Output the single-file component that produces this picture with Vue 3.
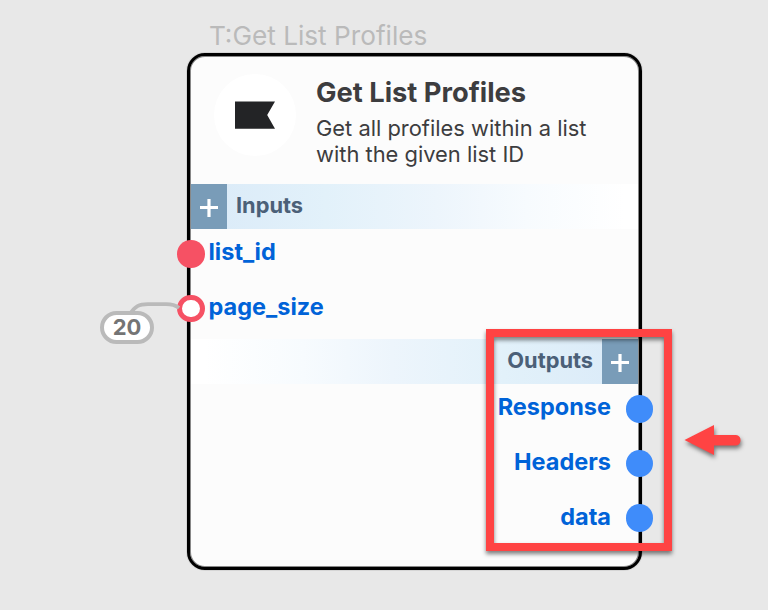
<script setup>
const inputs = [
  { name: 'list_id', filled: true },
  { name: 'page_size', filled: false, value: '20' },
]
const outputs = ['Response', 'Headers', 'data']
</script>

<template>
  <main class="canvas">
    <div class="caption">T:Get List Profiles</div>
    <section class="node">
      <header class="head">
        <div class="logo">
          <svg width="40" height="28" viewBox="0 0 40 28"><path d="M0 .5H40L32.2 14L40 27.7H0Z" fill="#232426" /></svg>
        </div>
        <div class="intro">
          <h1>Get List Profiles</h1>
          <p>Get all profiles within a list<br />with the given list ID</p>
        </div>
      </header>

      <div class="band">
        <button class="add" aria-label="Add input">
          <svg width="18" height="18" viewBox="0 0 18 18"><path d="M0 8.500H18M9 0V18" stroke="#fff" stroke-width="3.2" /></svg>
        </button>
        <span class="band-label">Inputs</span>
      </div>
      <ul class="ports inputs">
        <li v-for="port in inputs" :key="port.name">
          <i class="dot" :class="{ hollow: !port.filled }"></i>
          <span class="name">{{ port.name }}</span>
        </li>
      </ul>

      <div class="band reverse">
        <button class="add" aria-label="Add output">
          <svg width="18" height="18" viewBox="0 0 18 18"><path d="M0 8.500H18M9 0V18" stroke="#fff" stroke-width="3.2" /></svg>
        </button>
        <span class="band-label">Outputs</span>
      </div>
      <ul class="ports outputs">
        <li v-for="name in outputs" :key="name">
          <span class="name">{{ name }}</span>
          <i class="dot"></i>
        </li>
      </ul>
    </section>

    <svg class="wire" width="60" height="24" viewBox="0 0 60 24"><path d="M8 18C13 10 17 8.200 26 8.200H44C50 8.200 53 8.800 57 12" fill="none" stroke="#bababa" stroke-width="3.8" /></svg>
    <div class="value">{{ inputs[1].value }}</div>

    <div class="highlight"></div>
    <svg class="arrow" width="80" height="50" viewBox="0 0 80 50"><path d="M4.500 20L34 5V15H56A5.300 5.300 0 0 1 56 25.500H34V35Z" fill="#ff4343" /></svg>
  </main>
</template>

<style>
body { margin: 0; background: #e8e8e8; }
</style>

<style scoped>
.canvas {
  position: relative;
  box-sizing: border-box;
  width: 768px;
  height: 610px;
  padding: 20px 0 0 187px;
  overflow: hidden;
  background: #e8e8e8;
  font-family: Inter, "Liberation Sans", sans-serif;
}
.caption {
  height: 33px;
  padding-left: 22px;
  color: #bababa;
  font-size: 26.2px;
  line-height: 32px;
  white-space: nowrap;
}
.node {
  box-sizing: border-box;
  width: 455px;
  height: 517px;
  padding: 1px;
  border: 3px solid #000;
  border-radius: 18px;
  background: #fcfcfc;
  box-shadow: inset 0 0 0 1px #888, 0 0 0 1px rgba(0, 0, 0, .08);
}
.head {
  display: flex;
  box-sizing: border-box;
  height: 127px;
  padding: 17px 0 0 23px;
}
.logo {
  display: flex;
  align-items: center;
  justify-content: center;
  width: 82px;
  height: 82px;
  border-radius: 50%;
  background: #fff;
}
.intro { padding-left: 20px; color: #3d3d3f; white-space: nowrap; }
h1 { margin: 1px 0 4px; font-size: 27.3px; line-height: 36px; font-weight: 700; }
p { margin: 0; font-size: 21.9px; line-height: 26px; }
.band {
  display: flex;
  height: 45px;
  background: linear-gradient(90deg, #daeaf8, #e2f1fa 30%, #edf5fc 55%, #f7fbfe 75%, #fff 97%);
}
.band.reverse {
  flex-direction: row-reverse;
  background: linear-gradient(270deg, #daeaf8, #e2f1fa 30%, #edf5fc 55%, #f7fbfe 75%, #fff 97%);
}
.add {
  display: flex;
  align-items: center;
  justify-content: center;
  width: 36px;
  height: 45px;
  padding: 3px 0 0;
  border: 0;
  background: #799cb8;
}
.band-label {
  padding: 0 9px;
  color: #4b6078;
  font-size: 21.8px;
  line-height: 43px;
  font-weight: 700;
}
.ports { margin: 0; padding: 0; list-style: none; }
.ports li { display: flex; align-items: center; height: 54.7px; }
.inputs { height: 110px; margin-left: -14px; }
.inputs li { position: relative; top: -2.5px; }
.outputs { margin-right: -15px; }
.outputs li { justify-content: flex-end; position: relative; top: -2.5px; }
.name {
  margin: 0 4px;
  padding-bottom: 3px;
  color: #0063d8;
  font-size: 23.5px;
  line-height: 30px;
  font-weight: 700;
}
.outputs .name { margin-right: 14.5px; }
.dot { box-sizing: border-box; width: 27.5px; height: 27.5px; border-radius: 50%; background: #3f8cfa; }
.inputs .dot { background: #f65164; }
.inputs .dot.hollow { border: 5px solid #f65164; background: #fff; }
.wire { position: absolute; left: 122px; top: 296px; }
.value {
  position: absolute;
  left: 100px;
  top: 311px;
  box-sizing: border-box;
  width: 54px;
  height: 33px;
  border: 4px solid #bababa;
  border-radius: 17px;
  background: #fff;
  color: #747474;
  font-size: 22px;
  line-height: 25px;
  font-weight: 700;
  text-align: center;
}
.highlight {
  position: absolute;
  left: 486px;
  top: 329px;
  box-sizing: border-box;
  width: 186px;
  height: 222px;
  border: 8px solid #ff4343;
  filter: drop-shadow(0 3px 2px rgba(0, 0, 0, .5));
}
.arrow {
  position: absolute;
  left: 680px;
  top: 420px;
  filter: drop-shadow(1px 3px 2px rgba(0, 0, 0, .5));
}
</style>
